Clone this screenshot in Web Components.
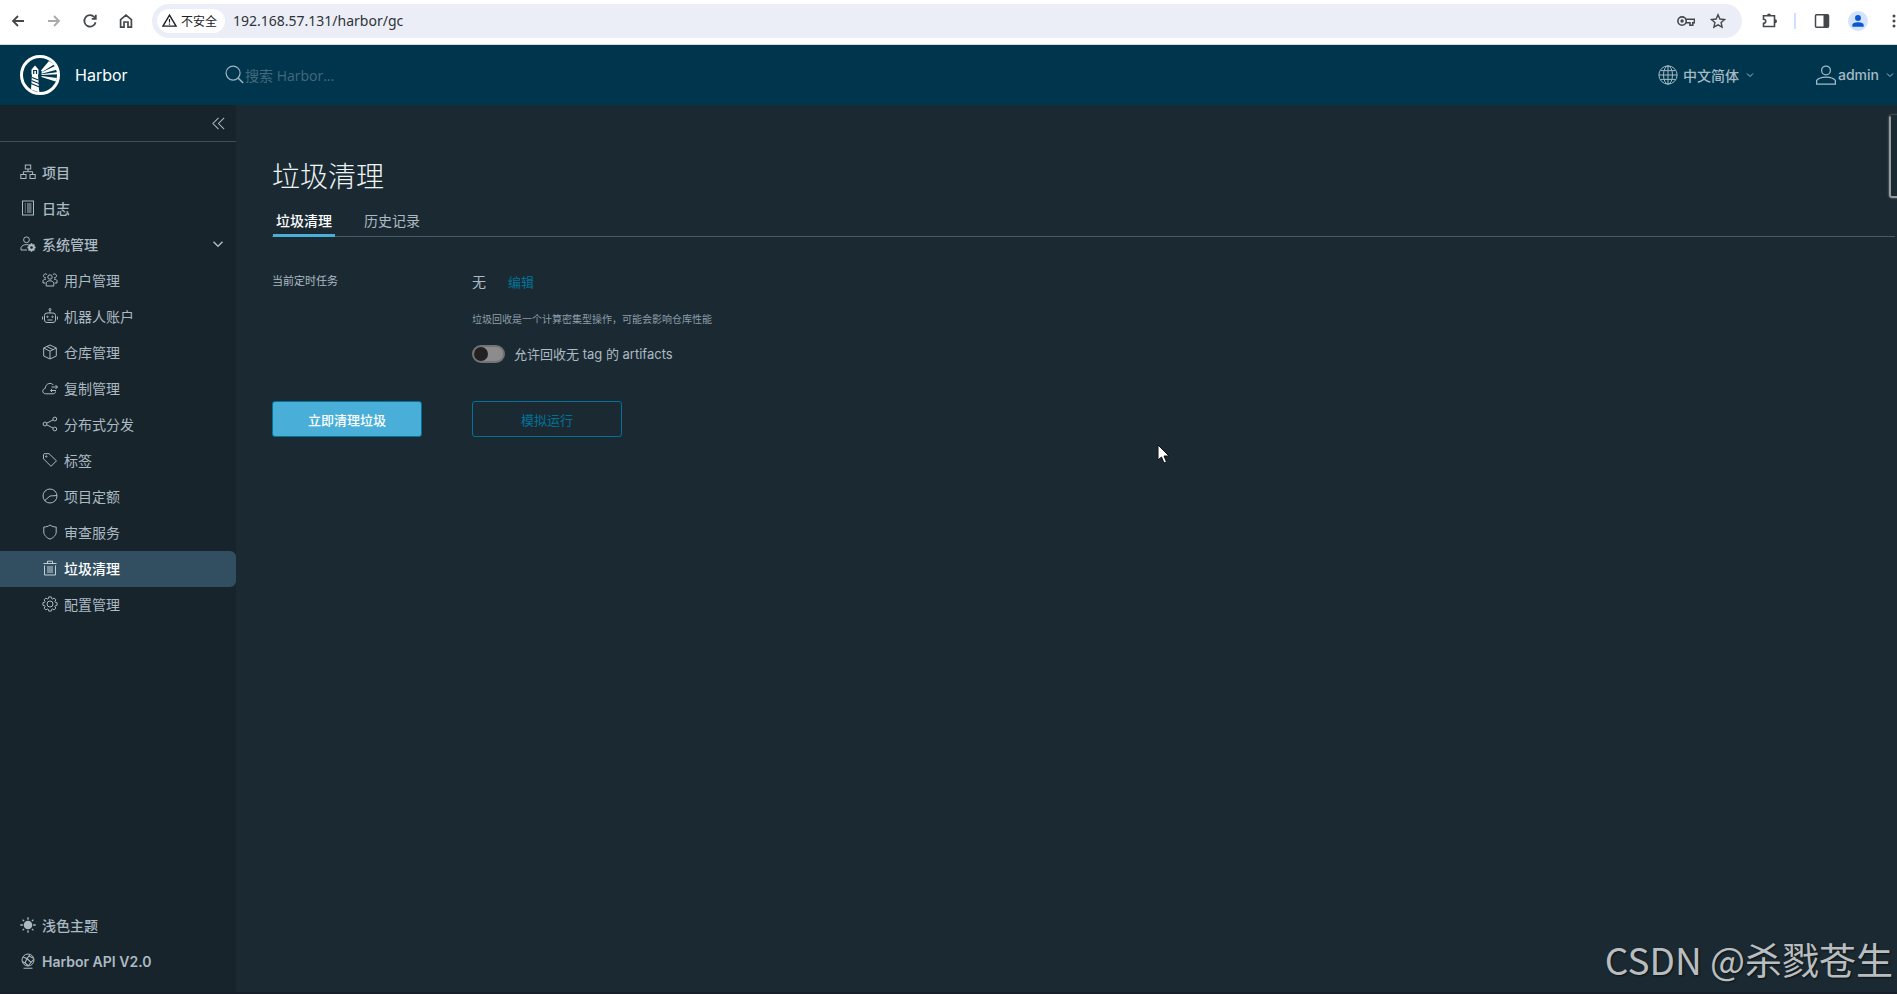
<!DOCTYPE html>
<html lang="zh-CN">
<head>
<meta charset="utf-8">
<title>Harbor</title>
<style>
html, body { margin: 0; height: 100%; }
body { font-family: Inter, "Noto Sans CJK SC", sans-serif; font-size: 14px; background: #1b2a32; overflow: hidden; }
</style>
</head>
<body>
<harbor-app></harbor-app>
<script>
const define = (name, css, html, init) => customElements.define(name, class extends HTMLElement {
  connectedCallback() {
    if (this.shadowRoot) return;
    const root = this.attachShadow({ mode: 'open' });
    root.innerHTML = `<style>*{box-sizing:border-box}${css}</style>${html}`;
    if (init) init(this, root);
  }
});

const gear = (cx, cy, r, n) => {
  let d = '';
  for (let i = 0; i < n; i++) {
    const a = i * 2 * Math.PI / n, h = Math.PI / n;
    const p = (rad, ang) => (cx + rad * Math.cos(ang)).toFixed(2) + ' ' + (cy + rad * Math.sin(ang)).toFixed(2);
    d += (i ? 'L' : 'M') + p(r, a - h * .45) + 'L' + p(r, a + h * .45) + 'L' + p(r * .78, a + h * .75) + 'L' + p(r * .78, a + h * 1.25);
  }
  return d + 'Z';
};

const icons = {
  back: '<path d="M14 8H3M8 3L3 8l5 5" stroke-width="1.8"/>',
  forward: '<path d="M2 8h11M8 3l5 5-5 5" stroke-width="1.8"/>',
  reload: '<path d="M13.6 9.2A5.7 5.7 0 1 1 12.2 4l1.2 1.4M13.8 1.8v4h-4" stroke-width="1.8"/>',
  home: '<path d="M2.6 6.6L8 2.2l5.4 4.400V14.200H10V9H6v5.200H2.600Z" stroke-width="1.700"/>',
  warning: '<path d="M8 2.200L15 14H1Z" stroke-width="1.500"/><path d="M8 6.500v3.500M8 11.200v1.300" stroke-width="1.300"/>',
  key: '<g stroke-width="1.400"><circle cx="4.500" cy="8" r="3.700"/><path d="M8 6.500h7.500v3H14v2.200h-2.500V9.500H8"/></g><circle cx="4.500" cy="8" r="1.500" fill="currentColor" stroke="none"/>',
  star: '<path d="M8 1.700l1.900 4.300 4.700.500-3.500 3.100 1 4.600L8 11.800l-4.100 2.400 1-4.600L1.400 6.500l4.700-.500Z" stroke-width="1.400"/>',
  puzzle: '<path d="M1.500 2.800h11v10.700h-11v-3.200c1.600 0 2.200-1 2.200-2s-.600-2-2.200-2Z" stroke-width="1.600"/><path d="M5 2.600a2 2 0 0 1 4 0ZM13 6.200a2 2 0 0 1 0 4Z" fill="currentColor" stroke="none"/>',
  panel: '<rect x="1.500" y="1.800" width="13" height="12.500" rx="1" stroke-width="1.500"/><path d="M9.500 2h5v12h-5Z" fill="currentColor" stroke="none"/>',
  profile: '<g fill="currentColor" stroke="none"><circle cx="8" cy="4.500" r="3.400"/><path d="M1.500 14.500v-1.500C1.500 10 5 9.300 8 9.300s6.500.700 6.500 3.700v1.500Z"/></g>',
  dots: '<g fill="currentColor" stroke="none"><circle cx="8" cy="3" r="1.500"/><circle cx="8" cy="8" r="1.500"/><circle cx="8" cy="13" r="1.500"/></g>',
  search: '<circle cx="6.800" cy="6.800" r="5.900" stroke-width="1"/><path d="M11 11l4.300 4.200" stroke-width="1.300"/>',
  globe: '<g stroke-width=".8"><circle cx="8" cy="8" r="7.300"/><ellipse cx="8" cy="8" rx="3.600" ry="7.300"/><path d="M8 .700v14.600M.700 8h14.600M2 4.500h12M2 11.500h12"/></g>',
  user: '<g stroke-width="1"><circle cx="8" cy="4.300" r="3.500"/><path d="M.5 15.300v-3C2 10.300 5 9.600 8 9.600s6 .700 7.500 2.700v3Z"/></g>',
  down: '<path d="M2 5l6 6 6-6" stroke-width="2"/>',
  collapse: '<path d="M8 2L2 8l6 6M14 2L8 8l6 6" stroke-width="1.100"/>',
  projects: '<rect x="5.300" y="1" width="5.400" height="4"/><rect x=".8" y="10.500" width="5.200" height="4"/><rect x="10" y="10.500" width="5.200" height="4"/><path d="M8 5v2.700M3.400 10.500V7.700h9.200v2.800"/>',
  logs: '<rect x="2.500" y="1" width="11" height="14"/><path d="M4.800 4h1M7 4h4.500M4.800 6h1M7 6h4.500M4.800 8h1M7 8h4.500M4.800 10h1M7 10h4.500M4.800 12h1M7 12h4.500"/>',
  admin: `<circle cx="6.500" cy="3.800" r="2.900"/><path d="M7 14H1v-2.500C2 9.500 4 8.600 6.500 8.600h1.500"/><path d="${gear(11.5, 11.5, 4.2, 8)}" fill="currentColor" stroke="none"/><circle cx="11.500" cy="11.500" r="1.300" fill="#17242b" stroke="none"/>`,
  users: '<circle cx="8" cy="5" r="2.200"/><path d="M4.200 14v-3.200C5 9.300 6.500 8.800 8 8.800s3 .5 3.800 2V14ZM5 2.500A2 2 0 1 0 4 5.800M11 2.500a2 2 0 1 1 1 3.300M3.300 11H1V8.500c.6-1 1.500-1.300 3-1.300M12.700 11H15V8.500c-.6-1-1.500-1.300-3-1.300"/>',
  robot: '<rect x="2.500" y="5" width="11" height="9.500" rx="2.500"/><path d="M8 5V2M.6 8.500v3M15.400 8.500v3M5.500 12h5"/><circle cx="8" cy="1.500" r="1"/><circle cx="5.500" cy="8.800" r=".7"/><circle cx="10.500" cy="8.800" r=".7"/>',
  box: '<path d="M8 1l6.300 3v8L8 15l-6.300-3V4ZM1.700 4L8 7.200 14.300 4M8 7.200V15M4.800 2.500L11 5.600"/>',
  cloud: '<path d="M13.500 11.500c0 1.500-1 2.300-2.300 2.300H3.500C-.2 13.500 0 8.800 3.200 8.500 3.500 3 9.500 2.200 11.300 5M9.500 7h6M13.500 5l2 2-2 2M14 10.500H8.500M10.200 8.800L8.500 10.500l1.700 1.700"/>',
  share: '<circle cx="3" cy="8" r="1.900"/><circle cx="12.800" cy="3" r="1.900"/><circle cx="12.800" cy="13" r="1.900"/><path d="M4.700 7.200l6.400-3.300M4.700 8.800l6.400 3.300"/>',
  tag: '<path d="M1.500 2.300v4.500l7.500 7.500 5.500-5.500L7 1.700H2.100Z"/><circle cx="4.300" cy="4.500" r=".7"/>',
  quota: '<circle cx="8" cy="8" r="7"/><path d="M15 7.500L8 8l-5.400 4.600"/>',
  shield: '<path d="M8 1c2 1.500 4 2 6.200 2v5c0 3.300-3 5.800-6.200 7.200C4.800 13.800 1.800 11.300 1.800 8V3C4 3 6 2.500 8 1Z"/>',
  trash: '<path d="M1.500 3.500h13M2.500 5.500v9.500h11V5.500M5.500 3.500V1.200h5v2.300M6 6v7M8 6v7M10 6v7"/>',
  gear: `<path d="${gear(8, 8, 7.2, 8)}"/><circle cx="8" cy="8" r="3"/>`,
  sun: '<circle cx="8" cy="8" r="4.300" fill="currentColor" stroke="none"/><path d="M8 .3v2.500M8 13.200v2.500M.3 8h2.500M13.200 8h2.500M2.600 2.600l1.500 1.500M11.900 11.900l1.500 1.500M13.400 2.600l-1.500 1.500M4.100 11.900l-1.500 1.500" stroke-width="1.300"/>',
  api: '<circle cx="8" cy="7" r="6"/><path d="M3.500 15.300h9M3 4l4 1.500 3-4M7 5.500l4 4 2.500-3M7 5.500l-2 4.500M11 9.500L8 13M2.500 8.500L5 10l3 2.500M9 3l4 2" stroke-width="1.100"/>'
};

define('app-icon', ':host{display:block;flex:none;width:16px;height:16px}svg{display:block;width:100%;height:100%;fill:none;stroke:currentColor}', '',
  (el, root) => root.innerHTML += `<svg viewBox="0 0 16 16" aria-hidden="true">${icons[el.getAttribute('name')]}</svg>`);

define('browser-bar', `
:host{display:flex;align-items:center;height:45px;flex:none;background:#fff;border-bottom:1px solid #d5dae0;color:#45484b;margin-right:-15px}
button{display:grid;place-items:center;border:0;background:none;padding:0;width:36px;height:32px;color:inherit}
button:disabled{color:#aaa}
.address{display:flex;align-items:center;flex:1;height:34px;border-radius:17px;background:#ebeef7;margin:0 10px 3px 8px;padding:0 8px 0 5px}
.address .chip{width:68px;height:24px;border-radius:12px;background:#fff;display:flex;align-items:center;justify-content:center;gap:4px;padding-right:4px;font-size:12px;color:#202124}
.chip app-icon{width:15px;height:15px}
input{flex:1;min-width:0;border:0;background:none;padding:0;margin-left:8px;font:14px "Noto Sans",sans-serif;color:#303236}
.address button{width:32px}
.address .key{width:18px;height:18px}
nav{display:flex;padding:0 0 3px 0}
.tools{display:flex;align-items:center;padding-bottom:3px}
.sep{width:2px;height:16px;background:#cfe1fc;margin:0 8px 0 6px}
.me app-icon{width:20px;height:20px;padding:3px;border-radius:50%;background:#d3e3fd;color:#0b57d0;box-sizing:border-box}
`, `<nav><button aria-label="后退"><app-icon name="back"></app-icon></button><button disabled aria-label="前进"><app-icon name="forward"></app-icon></button><button aria-label="刷新"><app-icon name="reload"></app-icon></button><button aria-label="主页"><app-icon name="home"></app-icon></button></nav>
<div class="address"><button class="chip"><app-icon name="warning"></app-icon>不安全</button><input aria-label="地址" value="192.168.57.131/harbor/gc"><button aria-label="密码"><app-icon class="key" name="key"></app-icon></button><button aria-label="收藏"><app-icon name="star"></app-icon></button></div>
<div class="tools"><button aria-label="扩展"><app-icon name="puzzle"></app-icon></button><span class="sep"></span><button aria-label="侧边栏"><app-icon name="panel"></app-icon></button><button class="me" aria-label="用户"><app-icon name="profile"></app-icon></button><button aria-label="更多"><app-icon name="dots"></app-icon></button></div>`);

define('harbor-logo', ':host{display:block;width:40px;height:40px}svg{display:block}', `
<svg width="40" height="40" viewBox="0 0 40 40" aria-hidden="true"><circle cx="20" cy="20" r="18.500" fill="none" stroke="#fff" stroke-width="3"/>
<g fill="#fff"><path d="M11.500 14.500L15 10.500l3.500 4v5h-.5l1 15 .5 3-8.500-3 1-15h-.5Z"/><path d="M21 15.500L29 6l5 3.500-12 7.500ZM21.500 17.400L36 10.500l1.500 4-16 4.200ZM21.500 19.300L38.500 17v2.200l-17 .900ZM21.500 21L37 23l-1.500 3.500-14-4.500Z"/></g>
<path d="M13.700 19v-3.500h2.800V19M12 22.500l6.500 2.500M11.500 25.500l7.500 3M11 28.500l8.500 3.500" fill="none" stroke="#00364d" stroke-width="1.200"/></svg>`);

define('harbor-header', `
:host{display:flex;align-items:center;height:60px;flex:none;background:#00364d;color:#fff;padding:0 3px 1px 20px}
a{display:flex;align-items:center;gap:15px;color:inherit;text-decoration:none;font-size:16px;width:205px}
label{display:flex;align-items:center;flex:1;color:#9fb4bf}
label app-icon{width:19px;height:19px}
input{border:0;background:none;padding:0;margin:2px 0 0 1px;width:180px;font:14px "Open Sans","Noto Sans CJK SC",sans-serif;color:#fff}
input::placeholder{color:#44697c;opacity:1}
button{display:flex;align-items:center;border:0;background:none;padding:0;font:500 14px Inter,"Noto Sans CJK SC",sans-serif;color:#a5bac5;white-space:nowrap}
button app-icon{width:20px;height:20px}
button app-icon.caret{width:8px;height:8px;margin-left:7px}
.lang{margin-right:62px}.lang app-icon:first-child{margin-right:5px}
.user app-icon:first-child{margin-right:2px}
`, `<a href="#"><harbor-logo></harbor-logo><span>Harbor</span></a>
<label><app-icon name="search"></app-icon><input type="text" aria-label="搜索" placeholder="搜索 Harbor..."></label>
<button class="lang"><app-icon name="globe"></app-icon>中文简体<app-icon class="caret" name="down"></app-icon></button>
<button class="user"><app-icon name="user"></app-icon>admin<app-icon class="caret" name="down"></app-icon></button>`);

define('nav-item', `
:host{display:block}
a{display:flex;align-items:center;gap:6px;height:36px;padding:0 12px 2px 20px;color:#acbac3;text-decoration:none;white-space:nowrap;font-weight:500}
:host([latin]) a{font-weight:600}
:host([child]) a{padding-left:42px;font-weight:400}
:host([active]) a{background:#324f62;color:#fff;font-weight:500;border-radius:0 6px 6px 0}
:host([active]) app-icon{color:#c4d0d8}
.more{margin-left:auto;width:12px;height:12px}
`, '', (el, root) => root.innerHTML += `<a href="#"${el.hasAttribute('active') ? ' aria-current="page"' : ''}><app-icon name="${el.getAttribute('icon')}"></app-icon><slot></slot>${el.hasAttribute('open') ? '<app-icon class="more" name="down"></app-icon>' : ''}</a>`);

define('harbor-sidebar', `
:host{display:flex;flex-direction:column;flex:none;width:236px;background:#17242b;color:#acbac3}
.top{display:flex;justify-content:flex-end;height:37px;border-bottom:1px solid #434f58;padding-right:8px}
.top button{border:0;background:none;padding:0 2px;color:inherit}
.top app-icon{width:15px;height:15px}
nav{padding-top:13px;flex:1}
footer{padding-bottom:12px}
`, `<div class="top"><button aria-label="收起"><app-icon name="collapse"></app-icon></button></div>
<nav><nav-item icon="projects">项目</nav-item><nav-item icon="logs">日志</nav-item><nav-item icon="admin" open>系统管理</nav-item>
<nav-item child icon="users">用户管理</nav-item><nav-item child icon="robot">机器人账户</nav-item><nav-item child icon="box">仓库管理</nav-item><nav-item child icon="cloud">复制管理</nav-item><nav-item child icon="share">分布式分发</nav-item><nav-item child icon="tag">标签</nav-item><nav-item child icon="quota">项目定额</nav-item><nav-item child icon="shield">审查服务</nav-item><nav-item child active icon="trash">垃圾清理</nav-item><nav-item child icon="gear">配置管理</nav-item></nav>
<footer><nav-item icon="sun">浅色主题</nav-item><nav-item latin icon="api">Harbor API V2.0</nav-item></footer>`);

define('tab-bar', `
:host{display:flex;gap:26px;height:32px;padding-left:1px;border-bottom:1px solid #495a67}
button{border:0;background:none;padding:0 3px;height:32px;font:14px "Noto Sans CJK SC",sans-serif;color:#acbac3;border-bottom:3px solid transparent}
button[aria-selected=true]{color:#fff;font-weight:500;border-color:#49afd9}
`, '<button role="tab" aria-selected="true">垃圾清理</button><button role="tab" aria-selected="false">历史记录</button>',
  el => el.setAttribute('role', 'tablist'));

define('toggle-switch', `
:host{display:block}
label{display:flex;align-items:center;gap:9px;font-size:13px;line-height:20px;color:#acbac3}
input{appearance:none;margin:0;width:33px;height:18px;border-radius:9px;background:#8c8c8c;border:2px solid #737373;display:flex;align-items:center}
input::before{content:"";width:14px;height:14px;border-radius:50%;background:#212121}
`, '<label><input type="checkbox" role="switch"><span><slot></slot></span></label>');

define('action-button', `
:host{display:block}
button{display:block;width:150px;height:36px;border:1px solid #00739b;border-radius:3px;background:none;color:#00739b;font:13px "Noto Sans CJK SC",sans-serif;padding:0}
:host([primary]) button{background:#49afd9;color:#fff;font-weight:500}
:host([link]) button{width:auto;height:24px;border:0}
`, '<button><slot></slot></button>');

define('gc-page', `
:host{display:block;flex:1;min-width:0;padding:52px 2px 0 36px;color:#acbac3}
h1{margin:0 0 8px;font-size:28px;line-height:40px;font-weight:300;color:#eef3f6}
.grid{display:grid;grid-template-columns:150px auto;column-gap:50px;justify-content:start;padding-top:32px}
.label{font-size:11px;line-height:24px}
.schedule{display:flex;align-items:center;gap:22px;height:24px}
p{margin:18px 0 17px;font-size:10px;line-height:16px;color:#8d9eaa}
.act{margin-top:37px}
`, `<h1>垃圾清理</h1><tab-bar></tab-bar>
<div class="grid"><div class="label">当前定时任务</div><div><div class="schedule"><span>无</span><action-button link>编辑</action-button></div>
<p>垃圾回收是一个计算密集型操作，可能会影响仓库性能</p><toggle-switch>允许回收无 tag 的 artifacts</toggle-switch></div>
<action-button class="act" primary>立即清理垃圾</action-button><action-button class="act">模拟运行</action-button></div>`);

define('harbor-app', `
:host{display:flex;flex-direction:column;min-height:100vh;position:relative;overflow:hidden;background:#1b2a32}
main{display:flex;flex:1;border-bottom:2px solid #17202a}
.handle{position:absolute;right:-8px;top:115px;width:16px;height:83px;border:2px solid #969a9d;border-top-color:transparent;border-radius:3px;box-shadow:0 0 2px #969a9d}
.mark{position:absolute;right:4px;bottom:10px;font:37px/50px "Noto Sans CJK SC",sans-serif;color:#babdbf;text-shadow:1px 1px 2px #0b1216;white-space:nowrap}
.pointer{position:absolute;left:61%;top:444px}
`, `<browser-bar></browser-bar><harbor-header></harbor-header><main><harbor-sidebar></harbor-sidebar><gc-page></gc-page></main>
<div class="handle"></div><div class="mark">CSDN @杀戮苍生</div>
<svg class="pointer" width="14" height="20" viewBox="0 0 14 20" aria-hidden="true"><path d="M1 1v15l3.500-3 2.500 6 2.500-1-2.500-6H12Z" fill="#fff" stroke="#111" stroke-width="1"/></svg>`);
</script>
</body>
</html>
